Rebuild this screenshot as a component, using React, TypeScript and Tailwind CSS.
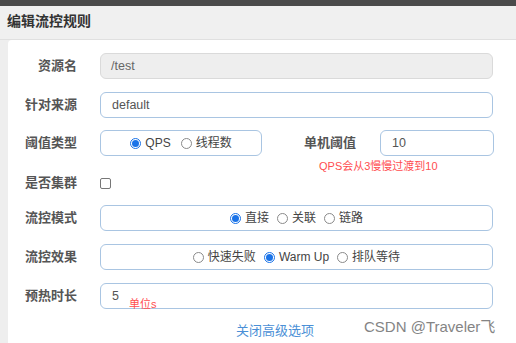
import React from "react";

const font = { fontFamily: '"Liberation Sans", "Noto Sans CJK SC", sans-serif' };

const Radio: React.FC<{ label: string; checked?: boolean }> = ({ label, checked = false }) => (
  <span className="flex items-center gap-[4px]">
    <span
      className={
        checked
          ? "flex h-[11px] w-[11px] items-center justify-center rounded-full border border-[#1a73e8] bg-white"
          : "h-[11px] w-[11px] rounded-full border border-[#8a8a8a] bg-white"
      }
    >
      {checked && <span className="h-[7px] w-[7px] rounded-full bg-[#1a73e8]" />}
    </span>
    <span className="text-[12px] text-[#444]">{label}</span>
  </span>
);

const Label: React.FC<{ text: string }> = ({ text }) => (
  <div className="w-[69px] shrink-0 text-right text-[13px] font-bold text-[#555]">{text}</div>
);

const Box: React.FC<{ className?: string; children?: React.ReactNode }> = ({ className = "", children }) => (
  <div
    className={
      "flex h-[26px] items-center rounded-[6px] border border-[#a9c5e2] bg-white px-[11px] text-[12.5px] text-[#555] " +
      className
    }
  >
    {children}
  </div>
);

export default function App() {
  return (
    <div className="relative flex h-[343px] w-[516px] flex-col overflow-hidden bg-[#eeeeee]" style={font}>
      {/* window bar */}
      <div className="h-[6px] shrink-0 bg-[#4b4b4b]" />
      <div className="flex h-[34px] shrink-0 items-start border-b border-[#e0e0e0] bg-[#f0f0f0] pl-[7px] pt-[5px]">
        <span className="text-[14px] font-bold text-[#333]">编辑流控规则</span>
      </div>

      <div className="flex flex-1 pl-[8px]">
        <div className="flex flex-1 flex-col rounded-tl-[4px] bg-white pt-[13px]">
          {/* 资源名 */}
          <div className="flex items-center">
            <Label text="资源名" />
            <div className="ml-[23px] flex h-[26px] w-[393px] items-center rounded-[6px] border border-[#dadada] bg-[#eeeeee] px-[10px] text-[12.5px] text-[#666]">
              /test
            </div>
          </div>

          {/* 针对来源 */}
          <div className="mt-[13px] flex items-center">
            <Label text="针对来源" />
            <Box className="ml-[23px] w-[393px]">default</Box>
          </div>

          {/* 阈值类型 */}
          <div className="mt-[12px] flex items-center">
            <Label text="阈值类型" />
            <Box className="ml-[23px] w-[162px] justify-center gap-[10px]">
              <Radio label="QPS" checked />
              <Radio label="线程数" />
            </Box>
            <div className="ml-[42px] text-[13px] font-bold text-[#555]">单机阈值</div>
            <Box className="ml-[24px] w-[114px]">10</Box>
          </div>
          <div className="ml-[311px] mt-[4px] h-[12px] text-[11px] leading-[12px] text-[#ff4d4f]">
            QPS会从3慢慢过渡到10
          </div>

          {/* 是否集群 */}
          <div className="mt-[5px] flex h-[12px] items-center">
            <Label text="是否集群" />
            <span className="ml-[23px] h-[11px] w-[11px] rounded-[2px] border border-[#777] bg-white" />
          </div>

          {/* 流控模式 */}
          <div className="mt-[16px] flex items-center">
            <Label text="流控模式" />
            <Box className="ml-[23px] w-[393px] justify-center gap-[8px]">
              <Radio label="直接" checked />
              <Radio label="关联" />
              <Radio label="链路" />
            </Box>
          </div>

          {/* 流控效果 */}
          <div className="mt-[13px] flex items-center">
            <Label text="流控效果" />
            <Box className="ml-[23px] w-[393px] justify-center gap-[8px]">
              <Radio label="快速失败" />
              <Radio label="Warm Up" checked />
              <Radio label="排队等待" />
            </Box>
          </div>

          {/* 预热时长 */}
          <div className="mt-[13px] flex items-center">
            <Label text="预热时长" />
            <Box className="relative ml-[23px] w-[393px]">
              5
              <span className="absolute left-[28px] top-[14px] text-[11px] leading-[12px] text-[#ff4d4f]">单位s</span>
            </Box>
          </div>

          <div className="mt-[12px] ml-[228px] text-[13px] text-[#4a8fd6]">关闭高级选项</div>
        </div>
      </div>

      {/* watermark */}
      <div className="pointer-events-none absolute left-[364px] top-[316px] text-[15px] text-[#666] opacity-80">
        CSDN @Traveler飞
      </div>
    </div>
  );
}
